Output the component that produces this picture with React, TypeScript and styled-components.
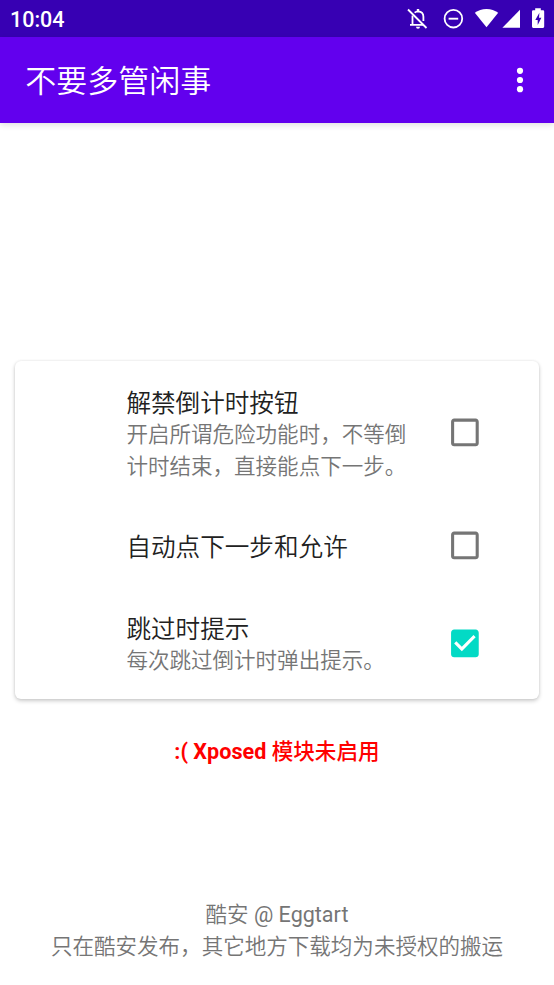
import React, { useState } from 'react';
import styled, { createGlobalStyle } from 'styled-components';

const GlobalStyle = createGlobalStyle`
  * { box-sizing: border-box; }
  body {
    margin: 0;
    background: #fff;
    font-family: Roboto, "Noto Sans CJK SC", sans-serif;
  }
`;

const HAN_FONT = '"Noto Sans CJK SC DemiLight", "Noto Sans CJK SC", sans-serif';

const Screen = styled.div`
  width: 554px;
  height: 985px;
  display: flex;
  flex-direction: column;
  overflow: hidden;
  background: #fff;
`;

const StatusBar = styled.header`
  height: 37px;
  flex: none;
  display: flex;
  align-items: center;
  justify-content: space-between;
  padding: 0 8px 0 10px;
  background: #3700b3;
  color: #fff;
`;

const Clock = styled.span`
  font-size: 21.5px;
  line-height: 37px;
  font-weight: 500;
  padding-top: 2px;
`;

const StatusIcons = styled.div`
  display: flex;
  align-items: center;

  svg { display: block; }
`;

const AppBar = styled.div`
  height: 86px;
  flex: none;
  display: flex;
  align-items: center;
  justify-content: space-between;
  padding: 0 15px 0 25.2px;
  background: #6200ee;
  color: #fff;
  box-shadow: 0 2px 6px rgba(0, 0, 0, 0.12);
`;

const Title = styled.h1`
  margin: 0;
  padding-top: 4px;
  font-family: Roboto, ${HAN_FONT};
  font-size: 31px;
  line-height: 40px;
  font-weight: 350;
`;

const MenuButton = styled.button`
  width: 38px;
  height: 38px;
  padding: 0;
  border: 0;
  background: none;
  color: #fff;

  svg { display: block; }
`;

const Card = styled.main`
  flex: none;
  height: 338px;
  margin: 238px 15px 0 15.4px;
  padding: 24px 55.5px 0 111px;
  border-radius: 6px;
  background: #fff;
  box-shadow: 0 2px 4px rgba(0, 0, 0, 0.2), 0 0 3px rgba(0, 0, 0, 0.08);
`;

const Row = styled.label<{ $height: number }>`
  height: ${({ $height }) => $height}px;
  display: flex;
  align-items: center;
  justify-content: space-between;
`;

const RowText = styled.div`
  width: 284px;
  padding-top: 5px;
  font-family: Roboto, ${HAN_FONT};
  font-weight: 350;
`;

const RowTitle = styled.div`
  font-size: 24.6px;
  line-height: 31px;
  color: #212121;
`;

const RowSummary = styled.div`
  font-size: 21.54px;
  line-height: 32px;
  color: #757575;
`;

const CheckInput = styled.input`
  position: absolute;
  opacity: 0;
  pointer-events: none;
`;

const CheckIcon = styled.svg<{ $on: boolean }>`
  flex: none;
  width: 36.9px;
  height: 36.9px;
  fill: ${({ $on }) => ($on ? '#03dac5' : '#757575')};
`;

const ModuleStatus = styled.p`
  margin: 37px 0 0;
  text-align: center;
  font-size: 21.6px;
  line-height: 32px;
  font-weight: 700;
  color: #f00;
`;

const StatusHan = styled.span`
  font-weight: 500;
`;

const Footer = styled.footer`
  margin-top: auto;
  padding-bottom: 22px;
  text-align: center;
  font-family: Roboto, ${HAN_FONT};
  font-size: 21.54px;
  line-height: 32px;
  color: #757575;
`;

type Option = { title: string; summary?: string; height: number; on: boolean };

const OPTIONS: Option[] = [
  { title: '解禁倒计时按钮', summary: '开启所谓危险功能时，不等倒计时结束，直接能点下一步。', height: 95, on: false },
  { title: '自动点下一步和允许', height: 130, on: false },
  { title: '跳过时提示', summary: '每次跳过倒计时弹出提示。', height: 66, on: true },
];

const CHECKED = 'M19 3H5c-1.11 0-2 .9-2 2v14c0 1.1.89 2 2 2h14c1.11 0 2-.9 2-2V5c0-1.1-.89-2-2-2zm-9 14l-5-5 1.41-1.41L10 14.17l7.59-7.59L19 8l-9 9z';
const UNCHECKED = 'M19 5v14H5V5h14m0-2H5c-1.1 0-2 .9-2 2v14c0 1.1.9 2 2 2h14c1.1 0 2-.9 2-2V5c0-1.1-.9-2-2-2z';

function CheckRow({ option }: { option: Option }) {
  const [on, setOn] = useState(option.on);
  return (
    <Row $height={option.height}>
      <RowText>
        <RowTitle>{option.title}</RowTitle>
        {option.summary && <RowSummary>{option.summary}</RowSummary>}
      </RowText>
      <CheckInput type="checkbox" checked={on} onChange={() => setOn(!on)} />
      <CheckIcon $on={on} viewBox="0.35 0 24 24">
        <path d={on ? CHECKED : UNCHECKED} />
      </CheckIcon>
    </Row>
  );
}

function StatusGlyphs() {
  return (
    <StatusIcons>
      <svg width="146" height="37" viewBox="400 0 146 37" fill="none" stroke="#fff">
        <path d="M408 9.5l18.5 18.5" strokeWidth="1.8" />
        <path d="M412.5 15.5v9M410 24.8h13.3M414.6 12.6q1.6-1.3 3.6-1.3 5.2.4 5.2 5.4v4.4" strokeWidth="1.8" />
        <path d="M418 9v2.2" strokeWidth="2.4" />
        <path d="M416 26.8h4a2 2 0 0 1-4 0z" fill="#fff" stroke="none" />
        <circle cx="453.4" cy="18.7" r="8.8" strokeWidth="1.8" />
        <path d="M448.6 18.7h9.6" strokeWidth="1.9" />
        <path d="M486.5 27.2L474.8 12.7q5-3.8 11.7-3.8t11.7 3.8z" fill="#fff" stroke="none" />
        <path d="M520 9.8v18h-17.6z" fill="#fff" stroke="none" />
        <path
          d="M535.2 8.2h5.6v2h2.2q1.2 0 1.2 1.2v15.2q0 1.3-1.2 1.3h-9.8q-1.2 0-1.2-1.3V11.4q0-1.2 1.2-1.2h2zM539.4 12.8l-4.1 7.1h2.4v5.1l3.7-7.2h-2.4z"
          fill="#fff"
          fillRule="evenodd"
          stroke="none"
        />
      </svg>
    </StatusIcons>
  );
}

export default function App() {
  return (
    <Screen>
      <GlobalStyle />
      <StatusBar>
        <Clock>10:04</Clock>
        <StatusGlyphs />
      </StatusBar>
      <AppBar>
        <Title>不要多管闲事</Title>
        <MenuButton aria-label="更多选项">
          <svg width="38" height="38" viewBox="0 0 38 38" fill="currentColor">
            <circle cx="19" cy="9.8" r="3.1" />
            <circle cx="19" cy="19" r="3.1" />
            <circle cx="19" cy="28.2" r="3.1" />
          </svg>
        </MenuButton>
      </AppBar>
      <Card>
        {OPTIONS.map((option) => (
          <CheckRow key={option.title} option={option} />
        ))}
      </Card>
      <ModuleStatus>:( Xposed <StatusHan>模块未启用</StatusHan></ModuleStatus>
      <Footer>
        <div>酷安 @ Eggtart</div>
        <div>只在酷安发布，其它地方下载均为未授权的搬运</div>
      </Footer>
    </Screen>
  );
}
